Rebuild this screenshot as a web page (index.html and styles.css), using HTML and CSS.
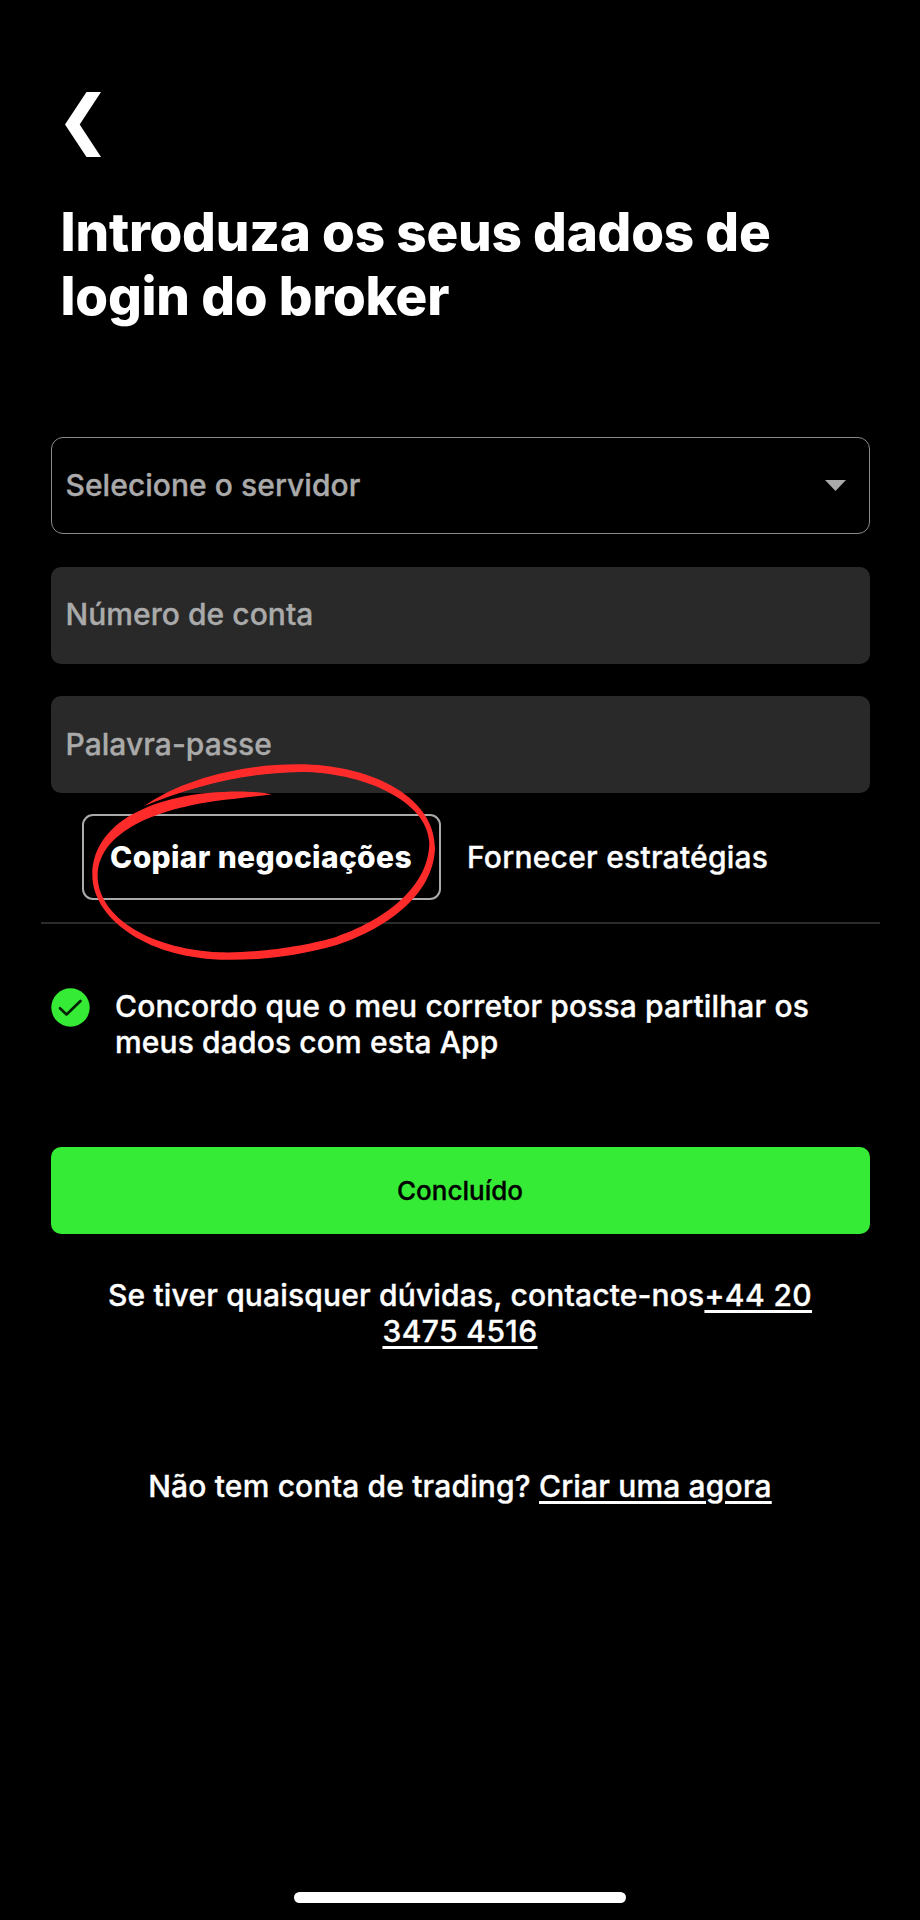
FILE: index.html
```html
<!DOCTYPE html>
<html lang="pt">
<head>
    <meta charset="UTF-8">
    <meta name="viewport" content="width=device-width, initial-scale=1.0">
    <title>Login do broker</title>
    <link rel="stylesheet" href="styles.css">
</head>
<body>
    <div class="screen">
        <button class="back" type="button" aria-label="Voltar">
            <svg width="36" height="66" viewBox="0 0 36 66"><path d="M21.5 0H36L14.7 32.5 36 65H21.5L0 32.5z" fill="#fff"/></svg>
        </button>

        <h1>Introduza os seus dados de<br>login do broker</h1>

        <!-- Dados de acesso -->
        <form class="login-form">
            <div class="field select">
                <span>Selecione o servidor</span>
                <svg width="21" height="11" viewBox="0 0 21 11"><path d="M0 0h21L10.500 11z" fill="#aaa"/></svg>
            </div>
            <div class="field">Número de conta</div>
            <div class="field">Palavra-passe</div>
        </form>

        <!-- Tipo de conta -->
        <div class="tabs">
            <div class="tab active">
                Copiar negociações
                <svg class="marker" width="400" height="240" viewBox="0 0 1200 720">
                    <path fill="#ff2b2b" d="M252 198C380 110 560 72 720 73C915 74 1124 160 1125 325C1120 470 970 570 830 615C700 652 580 662 480 659C250 650 97 530 97 405C97 250 280 150 560 155C600 156 620 160 636 163C600 168 560 172 520 177C330 195 113 260 113 410C115 520 250 625 480 637C600 640 750 615 830 590C960 545 1105 450 1108 310C1105 180 900 95 720 96C540 100 400 140 252 198z"/>
                </svg>
            </div>
            <div class="tab">Fornecer estratégias</div>
        </div>

        <label class="consent">
            <svg width="39" height="39" viewBox="0 0 39 39">
                <circle cx="19.5" cy="19.5" r="19.2" fill="#35eb35"/>
                <path d="M9 20.2l6.5 6.3L29.5 13" fill="none" stroke="#062006" stroke-width="2.6" stroke-linecap="round" stroke-linejoin="round"/>
            </svg>
            <p>Concordo que o meu corretor possa partilhar os<br>meus dados com esta App</p>
        </label>

        <button class="submit" type="button">Concluído</button>

        <p class="help">Se tiver quaisquer dúvidas, contacte-nos<a>+44 20<br>3475 4516</a></p>
        <p class="signup">Não tem conta de trading? <a>Criar uma agora</a></p>

        <div class="home-bar"></div>
    </div>
</body>
</html>
```
FILE: styles.css
```css
* {
    box-sizing: border-box;
}
body {
    margin: 0;
    background-color: #000;
    color: #fff;
    font-family: Inter, "Liberation Sans", sans-serif;
    font-size: 30px;
    font-weight: 500;
    line-height: 36px;
    letter-spacing: 0.13px;
    -webkit-text-stroke: 0.35px;
}
.screen {
    display: flex;
    flex-direction: column;
    height: 1920px;
    padding: 92px 50.5px 17px;
}
button {
    border: none;
    padding: 0;
    font: inherit;
}
p {
    margin: 0;
}
svg {
    display: block;
    flex-shrink: 0;
}
.back {
    align-self: flex-start;
    margin-left: 14.5px;
    background: none;
}
h1 {
    margin: 42px 0 0 10px;
    font-size: 53px;
    font-weight: 800;
    line-height: 64px;
    letter-spacing: -0.21px;
    -webkit-text-stroke: 0;
}
.login-form {
    display: flex;
    flex-direction: column;
    gap: 32.5px;
    margin-top: 109px;
    letter-spacing: 0.05px;
}
.field {
    display: flex;
    align-items: center;
    justify-content: space-between;
    height: 97px;
    padding: 0 15px 2px;
    border-radius: 10px;
    background-color: #292929;
    color: #aaa;
}
.field.select {
    padding: 0 23px 2px 14px;
    border: 1px solid #8a8a8a;
    border-radius: 12px;
    background: none;
}
.select svg {
    margin-top: 1px;
}
.tabs {
    display: flex;
    margin: 21px -10px 0;
    padding: 0 0 21.5px 41.5px;
    border-bottom: 2px solid #2b2b2b;
}
.tab {
    position: relative;
    padding: 25px 26px;
    height: 86px;
    letter-spacing: 0.25px;
    white-space: nowrap;
}
.tab.active {
    width: 359px;
    padding-top: 23px;
    border: 2px solid #aaa;
    border-radius: 11px;
    font-weight: 800;
    letter-spacing: 0.34px;
    -webkit-text-stroke: 0;
}
.marker {
    position: absolute;
    left: -24px;
    top: -76px;
}
.consent {
    display: flex;
    gap: 25.5px;
    margin-top: 64.5px;
}
.submit {
    height: 87px;
    margin-top: 86.5px;
    padding-top: 1px;
    border-radius: 10px;
    background-color: #35eb35;
    color: #000;
    font-size: 26px;
    letter-spacing: 0;
}
.help,
.signup {
    margin-top: 43px;
    text-align: center;
    letter-spacing: 0.17px;
}
.signup {
    margin-top: 119px;
}
a {
    text-decoration: underline;
    text-decoration-thickness: 2.5px;
    text-underline-offset: 4px;
}
.help a {
    letter-spacing: 0.4px;
}
.home-bar {
    width: 332px;
    height: 11px;
    margin: auto auto 0;
    border-radius: 6px;
    background-color: #fff;
}
```
